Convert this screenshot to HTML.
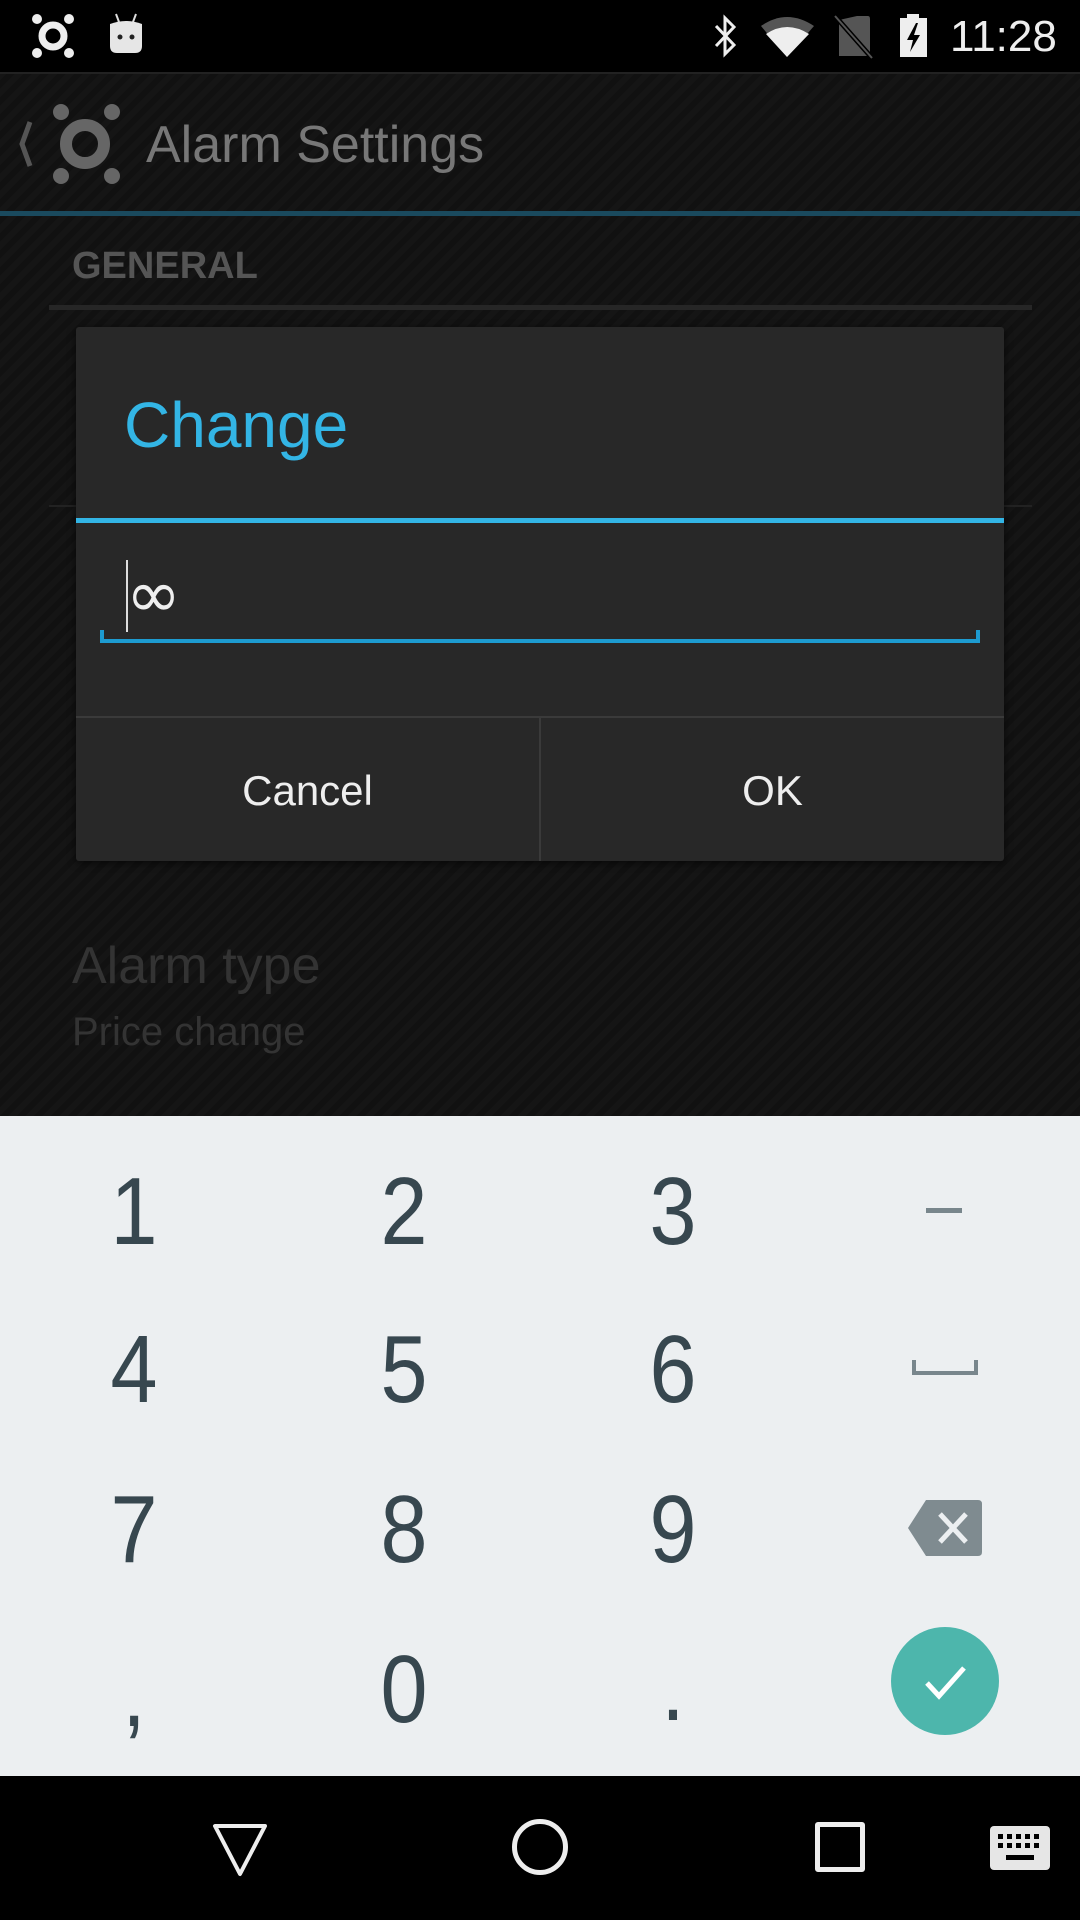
<!DOCTYPE html>
<html><head><meta charset="utf-8"><style>
*{margin:0;padding:0;box-sizing:border-box}
body{width:1080px;height:1920px;overflow:hidden;background:#131313;font-family:"Liberation Sans",sans-serif;position:relative}
.a{position:absolute}
.bg{left:0;top:72px;width:1080px;height:1044px;background:repeating-linear-gradient(135deg,#151515 0 6px,#111 6px 12px)}
.t{white-space:nowrap;line-height:1}
.k{position:absolute;width:200px;text-align:center;color:#37474f;font-size:96px;line-height:1;transform:translate(-50%,-50%) scaleX(.88)}
</style></head><body>
<div class="a" style="left:0;top:0;width:1080px;height:72px;background:#000"></div>
<svg class="a" style="left:28px;top:12px" width="52" height="48" viewBox="0 0 52 48">
<circle cx="25" cy="24" r="11" fill="none" stroke="#eee" stroke-width="7"/>
<circle cx="9" cy="7" r="5" fill="#eee"/><circle cx="41" cy="7" r="5" fill="#eee"/><circle cx="9" cy="41" r="5" fill="#eee"/><circle cx="41" cy="41" r="5" fill="#eee"/></svg>
<svg class="a" style="left:106px;top:12px" width="40" height="44" viewBox="0 0 40 44">
<path d="M10 2 L13 10 M30 2 L27 10" stroke="#ddd" stroke-width="2"/>
<path d="M4 12 Q20 6 36 12 L36 34 Q36 41 29 41 L11 41 Q4 41 4 34Z" fill="#e6e6e6"/>
<circle cx="14" cy="25" r="2.5" fill="#222"/><circle cx="26" cy="25" r="2.5" fill="#222"/></svg>
<svg class="a" style="left:712px;top:14px" width="28" height="44" viewBox="0 0 28 44">
<path d="M4 12 L22 31 L13 40 L13 4 L22 13 L4 32" fill="none" stroke="#eee" stroke-width="3"/></svg>
<svg class="a" style="left:760px;top:14px" width="56" height="44" viewBox="0 0 56 44">
<path d="M1 12 Q27 -6 54 12 L27 43Z" fill="#555"/><path d="M6 20 Q27 6 49 20 L27 43Z" fill="#eee"/></svg>
<svg class="a" style="left:834px;top:14px" width="40" height="46" viewBox="0 0 40 46">
<path d="M5 6 L23 2 L34 2 Q36 2 36 5 L36 42 L5 42Z" fill="#555"/><path d="M1 2 L38 44" stroke="#000" stroke-width="5"/><path d="M1 2 L38 44" stroke="#555" stroke-width="2"/></svg>
<svg class="a" style="left:898px;top:13px" width="32" height="46" viewBox="0 0 32 46">
<rect x="9" y="1" width="12" height="5" fill="#eee"/><rect x="2" y="5" width="27" height="39" fill="#eee"/>
<path d="M18 10 L9 27 L15 27 L12 39 L22 22 L16 22 L20 10Z" fill="#000"/></svg>
<div class="a t" style="left:950px;top:15px;font-size:44px;color:#eee">11:28</div>

<div class="a bg"></div>
<div class="a" style="left:0;top:72px;width:1080px;height:2px;background:#222"></div>
<svg class="a" style="left:10px;top:100px" width="130" height="88" viewBox="0 0 130 88">
<path d="M20 22 L12 44 L20 66" fill="none" stroke="#555" stroke-width="5"/>
<circle cx="75" cy="44" r="19" fill="none" stroke="#666" stroke-width="12"/>
<circle cx="51" cy="12" r="8" fill="#666"/><circle cx="102" cy="12" r="8" fill="#666"/><circle cx="51" cy="76" r="8" fill="#666"/><circle cx="102" cy="76" r="8" fill="#666"/></svg>
<div class="a t" style="left:146px;top:119px;font-size:52px;color:#777">Alarm Settings</div>
<div class="a" style="left:0;top:211px;width:1080px;height:5px;background:#1a4a5e"></div>
<div class="a t" style="left:72px;top:247px;font-size:38px;font-weight:bold;color:#555">GENERAL</div>
<div class="a" style="left:49px;top:305px;width:983px;height:5px;background:#262626"></div>
<div class="a" style="left:49px;top:505px;width:983px;height:2px;background:#222"></div>
<div class="a t" style="left:72px;top:940px;font-size:52px;color:#333">Alarm type</div>
<div class="a t" style="left:72px;top:1012px;font-size:40px;color:#333">Price change</div>

<div class="a" style="left:76px;top:327px;width:928px;height:534px;background:#282828;border-radius:3px;box-shadow:0 2px 8px rgba(0,0,0,.6)"></div>
<div class="a t" style="left:124px;top:393px;font-size:64px;color:#33b5e5">Change</div>
<div class="a" style="left:76px;top:518px;width:928px;height:5px;background:#33b5e5"></div>
<div class="a" style="left:126px;top:560px;width:2px;height:72px;background:#ddd"></div>
<div class="a t" style="left:126px;top:562px;font-size:66px;color:#eee;font-family:'DejaVu Sans',sans-serif">∞</div>
<div class="a" style="left:100px;top:639px;width:880px;height:4px;background:#1d9bd0"></div>
<div class="a" style="left:100px;top:630px;width:4px;height:13px;background:#1d9bd0"></div>
<div class="a" style="left:976px;top:630px;width:4px;height:13px;background:#1d9bd0"></div>
<div class="a" style="left:76px;top:716px;width:928px;height:2px;background:#3a3a3a"></div>
<div class="a" style="left:539px;top:718px;width:2px;height:143px;background:#3a3a3a"></div>
<div class="a t" style="left:76px;top:770px;width:463px;text-align:center;font-size:42px;color:#eee">Cancel</div>
<div class="a t" style="left:541px;top:770px;width:463px;text-align:center;font-size:42px;color:#eee">OK</div>

<div class="a" style="left:0;top:1116px;width:1080px;height:660px;background:#eceff1"></div>
<div class="k" style="left:134px;top:1212px">1</div>
<div class="k" style="left:404px;top:1212px">2</div>
<div class="k" style="left:673px;top:1212px">3</div>
<div class="a" style="left:926px;top:1208px;width:36px;height:5px;background:#78868c"></div>
<div class="k" style="left:134px;top:1370px">4</div>
<div class="k" style="left:404px;top:1370px">5</div>
<div class="k" style="left:673px;top:1370px">6</div>
<svg class="a" style="left:912px;top:1358px" width="66" height="18" viewBox="0 0 66 18"><path d="M2 2 L2 15 L64 15 L64 2" fill="none" stroke="#78868c" stroke-width="4"/></svg>
<div class="k" style="left:134px;top:1530px">7</div>
<div class="k" style="left:404px;top:1530px">8</div>
<div class="k" style="left:673px;top:1530px">9</div>
<svg class="a" style="left:908px;top:1500px" width="74" height="56" viewBox="0 0 74 56">
<path d="M18 0 L70 0 Q74 0 74 4 L74 52 Q74 56 70 56 L18 56 L0 28Z" fill="#7f8b90"/>
<path d="M32 14 L58 42 M58 14 L32 42" stroke="#eceff1" stroke-width="5"/></svg>
<div class="k" style="left:134px;top:1694px">,</div>
<div class="k" style="left:404px;top:1690px">0</div>
<div class="k" style="left:673px;top:1688px">.</div>
<div class="a" style="left:891px;top:1627px;width:108px;height:108px;border-radius:50%;background:#4db6ac"></div>
<svg class="a" style="left:915px;top:1651px" width="60" height="60" viewBox="0 0 60 60"><path d="M12 32 L24 45 L49 17" fill="none" stroke="#fff" stroke-width="5"/></svg>

<div class="a" style="left:0;top:1776px;width:1080px;height:144px;background:#000"></div>
<svg class="a" style="left:210px;top:1818px" width="60" height="60" viewBox="0 0 60 60"><path d="M5 8 L55 8 L30 56Z" fill="none" stroke="#eee" stroke-width="4" stroke-linejoin="round"/></svg>
<div class="a" style="left:512px;top:1819px;width:56px;height:56px;border-radius:50%;border:5px solid #eee"></div>
<div class="a" style="left:815px;top:1822px;width:50px;height:50px;border:5px solid #eee;border-radius:3px"></div>
<svg class="a" style="left:990px;top:1826px" width="60" height="44" viewBox="0 0 60 44">
<rect x="0" y="0" width="60" height="44" rx="4" fill="#e6e6e6"/>
<g fill="#000"><rect x="8" y="8" width="5" height="5"/><rect x="17" y="8" width="5" height="5"/><rect x="26" y="8" width="5" height="5"/><rect x="35" y="8" width="5" height="5"/><rect x="44" y="8" width="5" height="5"/>
<rect x="8" y="17" width="5" height="5"/><rect x="17" y="17" width="5" height="5"/><rect x="26" y="17" width="5" height="5"/><rect x="35" y="17" width="5" height="5"/><rect x="44" y="17" width="5" height="5"/>
<rect x="16" y="29" width="28" height="5"/></g></svg>
</body></html>
